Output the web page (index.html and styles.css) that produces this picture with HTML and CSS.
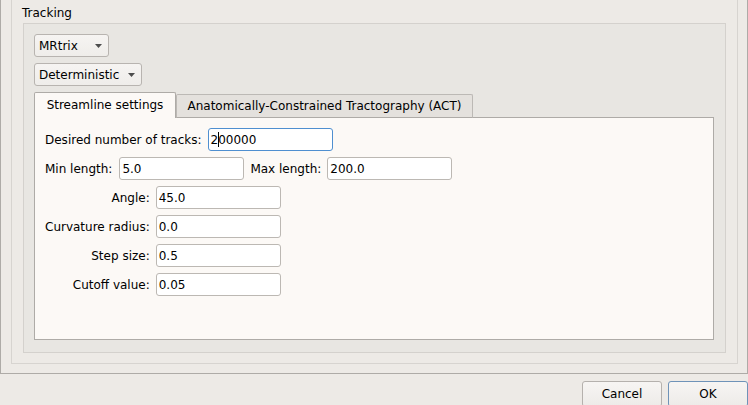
FILE: index.html
```html
<!DOCTYPE html>
<html>
<head>
<meta charset="utf-8">
<link rel="stylesheet" href="styles.css">
</head>
<body>
<div class="scroll">
  <div class="outer-group">
    <div class="group-title">Tracking</div>
    <div class="group-frame">
      <div class="combo combo-mrtrix"><span>MRtrix</span><svg class="arrow" width="7" height="4" viewBox="0 0 7 4"><path d="M0 0H7L3.5 4Z" fill="#4d4d4d"/></svg></div>
      <div class="combo combo-det"><span>Deterministic</span><svg class="arrow" width="7" height="4" viewBox="0 0 7 4"><path d="M0 0H7L3.5 4Z" fill="#4d4d4d"/></svg></div>
      <div class="tabs">
        <div class="tab tab-active">Streamline settings</div>
        <div class="tab tab-inactive">Anatomically-Constrained Tractography (ACT)</div>
        <div class="tab-filler"></div>
      </div>
      <div class="pane">
        <div class="row">
          <span class="label">Desired number of tracks:</span>
          <div class="field field-focus">2<span class="caret"></span>00000</div>
        </div>
        <div class="row">
          <span class="label label-min">Min length:</span>
          <div class="field">5.0</div>
          <span class="label">Max length:</span>
          <div class="field">200.0</div>
        </div>
        <div class="form-grid">
          <span class="label label-right">Angle:</span>
          <div class="field">45.0</div>
          <span class="label label-right">Curvature radius:</span>
          <div class="field">0.0</div>
          <span class="label label-right">Step size:</span>
          <div class="field">0.5</div>
          <span class="label label-right">Cutoff value:</span>
          <div class="field">0.05</div>
        </div>
      </div>
    </div>
  </div>
</div>
<div class="buttons">
  <div class="btn">Cancel</div>
  <div class="btn btn-default">OK</div>
</div>
</body>
</html>
```

FILE: styles.css
```css
* { box-sizing: border-box; }
html, body {
  margin: 0;
  padding: 0;
}
body {
  width: 748px;
  height: 405px;
  overflow: hidden;
  background: #edeae6;
  font-family: "DejaVu Sans", "Liberation Sans", sans-serif;
  font-size: 12px;
  line-height: 14px;
  color: #000;
}
.scroll {
  height: 374px;
  border: 1px solid #aeaba7;
  border-top: none;
  padding: 0 9px 9px 10px;
  display: flex;
  flex-direction: column;
}
.outer-group {
  flex: 1;
  border: 1px solid #d7d4d0;
  border-top: none;
  padding: 6px 11px 10px 11px;
  display: flex;
  flex-direction: column;
}
.group-title {
  margin-left: -1px;
  margin-bottom: 3px;
  height: 14px;
}
.group-frame {
  flex: 1;
  border: 1px solid #d4d1cd;
  background: #e8e6e2;
  padding: 10px 11px 12px 10px;
  display: flex;
  flex-direction: column;
}
.combo {
  height: 23px;
  border: 1px solid #b8b4b0;
  border-radius: 3px;
  background: linear-gradient(#f6f4f2, #efedea);
  display: flex;
  align-items: center;
  justify-content: space-between;
  padding: 0 6px 0 4px;
  margin-bottom: 6px;
}
.combo-mrtrix { width: 75px; }
.combo-det { width: 108px; }
.arrow {
  display: block;
  margin-top: 1px;
}
.tabs {
  display: flex;
  align-items: flex-end;
  height: 26px;
}
.tab {
  display: flex;
  align-items: center;
  justify-content: center;
  border: 1px solid #aeaba7;
  border-radius: 2px 2px 0 0;
}
.tab-active {
  width: 142px;
  height: 26px;
  border-bottom: none;
  background: #fcf9f6;
  padding-bottom: 1px;
}
.tab-inactive {
  width: 297px;
  height: 24px;
  background: #e4e1dd;
  border-color: #bcb9b5;
  border-bottom-color: #aeaba7;
}
.tab-filler {
  flex: 1;
  height: 1px;
  background: #aeaba7;
}
.pane {
  flex: 1;
  border: 1px solid #aeaba7;
  border-top: none;
  background: #fcf9f6;
  padding: 10px 10px;
}
.row {
  display: flex;
  align-items: center;
  gap: 6px;
  margin-bottom: 6px;
}
.label-min {
  margin-right: 1px;
}
.field {
  width: 125px;
  height: 23px;
  border: 1px solid #bcb8b3;
  border-radius: 3px;
  background: #fff;
  padding-left: 2px;
  display: flex;
  align-items: center;
}
.field-focus {
  border-color: #4f8fd0;
}
.caret {
  display: inline-block;
  width: 1px;
  height: 15px;
  background: #000;
  margin-right: -1px;
}
.form-grid {
  display: grid;
  grid-template-columns: max-content 125px;
  column-gap: 6px;
  row-gap: 6px;
  align-items: center;
}
.label-right {
  text-align: right;
}
.buttons {
  display: flex;
  justify-content: flex-end;
  gap: 6px;
  margin-top: 7px;
}
.btn {
  width: 80px;
  height: 26px;
  border: 1px solid #b5b1ad;
  border-radius: 3px;
  background: linear-gradient(#f7f5f3, #edebe8);
  display: flex;
  align-items: center;
  justify-content: center;
}
.btn-default {
  border-color: #6f93b8;
}
```
